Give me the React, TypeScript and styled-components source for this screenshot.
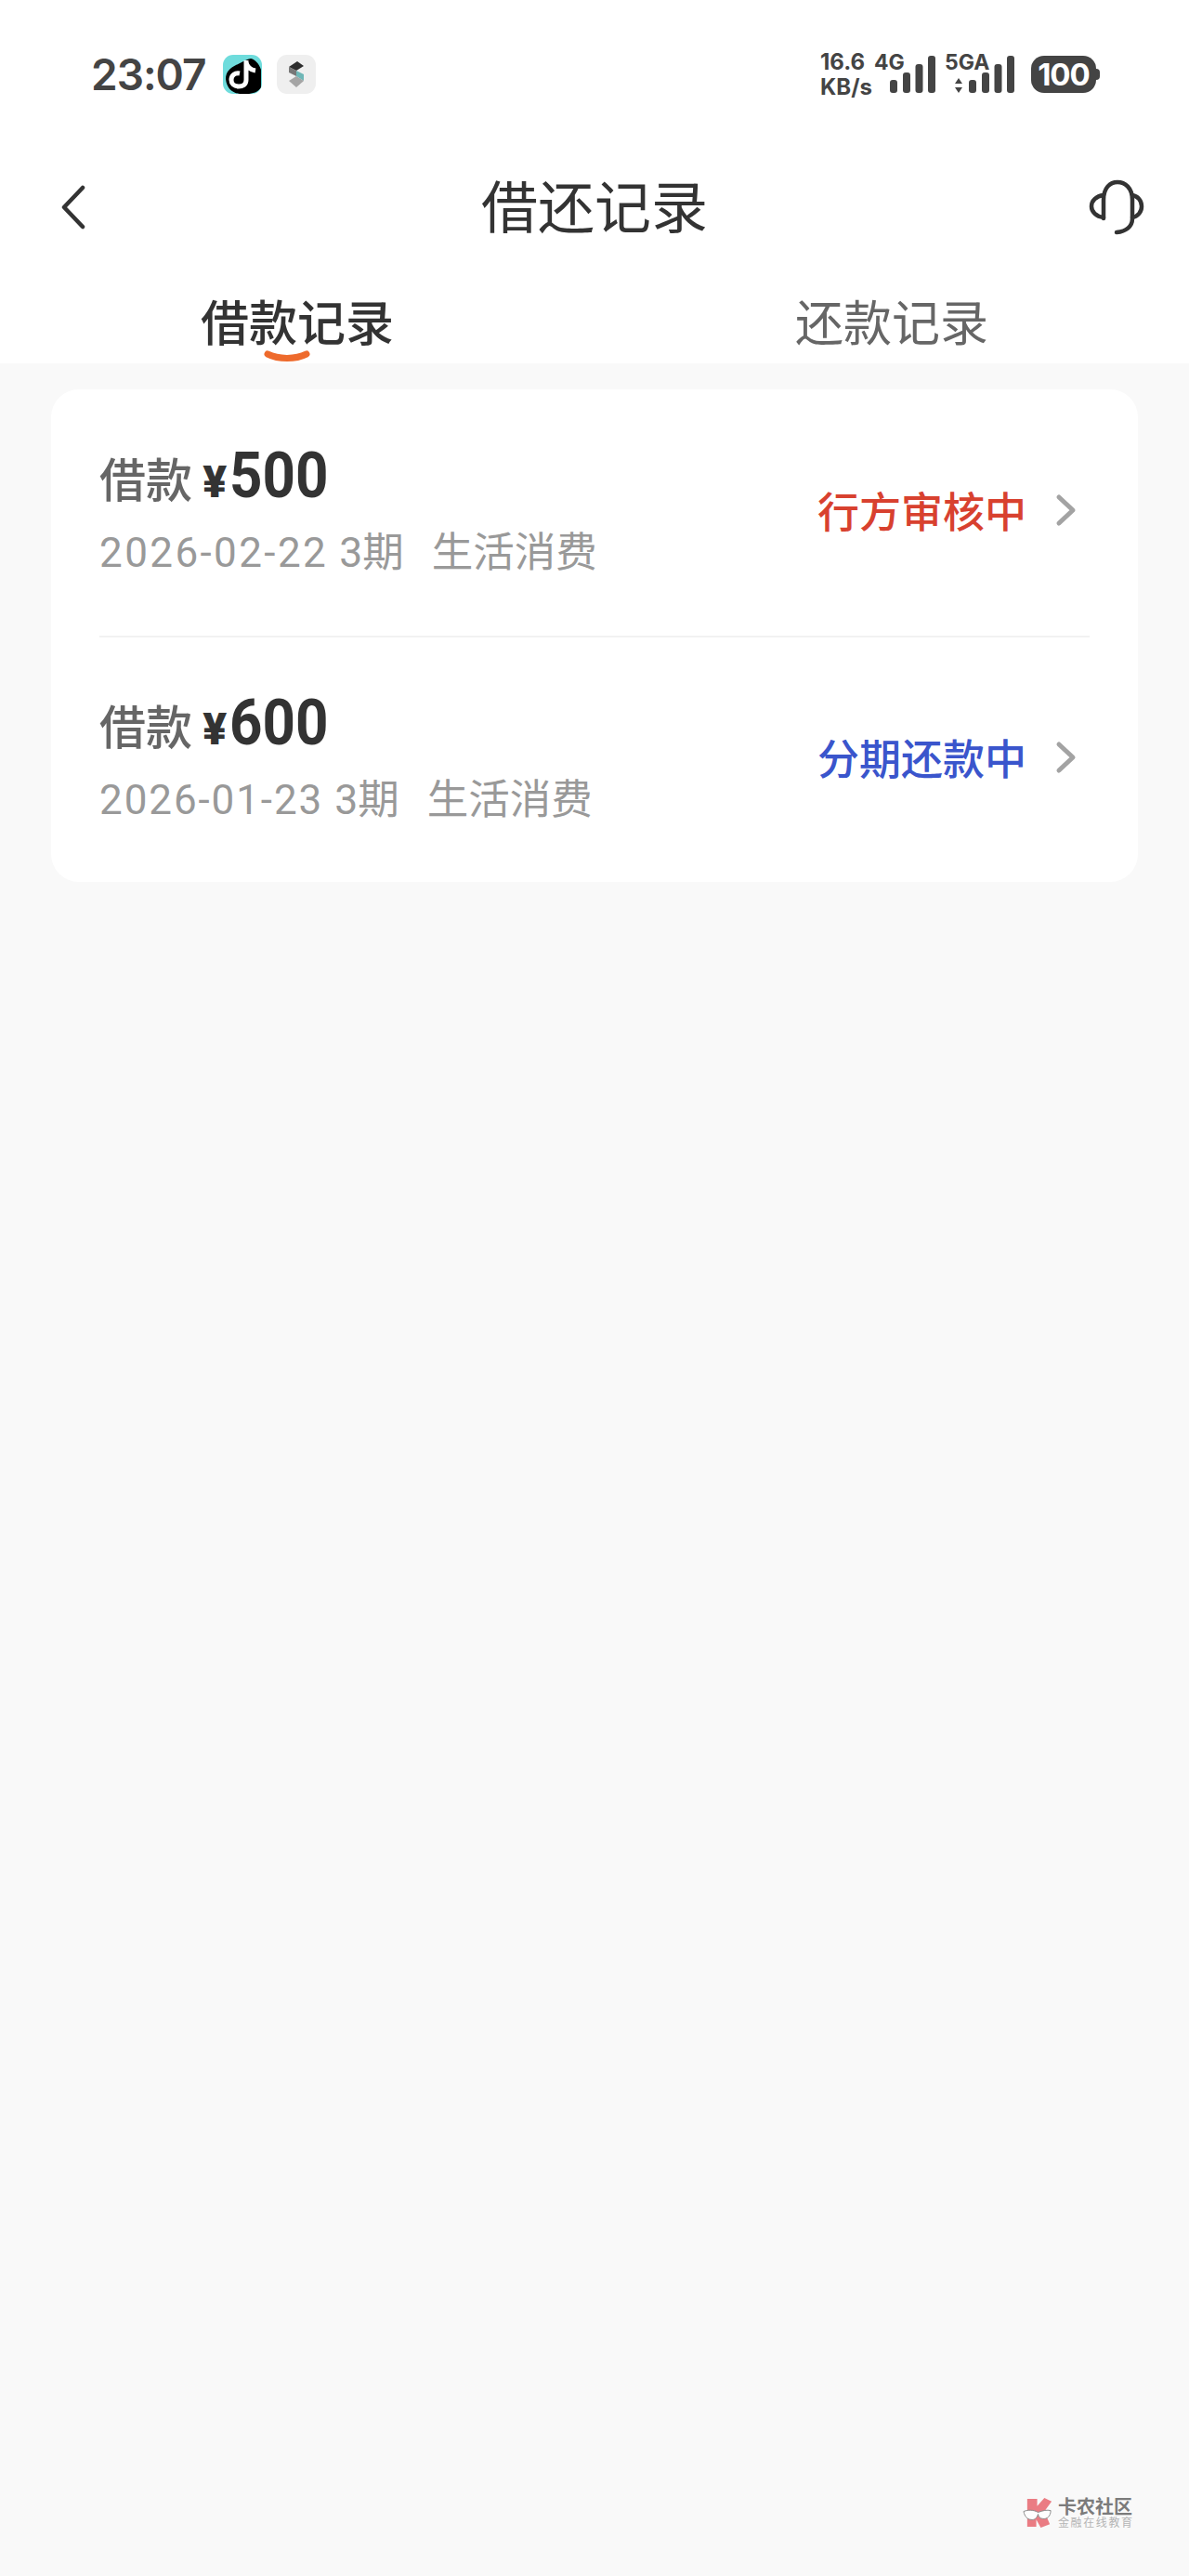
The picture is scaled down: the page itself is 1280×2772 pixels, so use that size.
import React from 'react'
import styled, { createGlobalStyle } from 'styled-components'

const GlobalStyle = createGlobalStyle`
  html, body { margin: 0; padding: 0; background: #f9f9f9; }
  * { box-sizing: border-box; }
  body { font-family: "Noto Sans CJK SC", "Noto Sans", sans-serif; }
`

type Loan = {
  amount: string
  date: string
  period: string
  track: number
  status: string
  tone: string
}

const loans: Loan[] = [
  { amount: '500', date: '2026-02-22', period: '3期', track: 2.4, status: '行方审核中', tone: '#d8412f' },
  { amount: '600', date: '2026-01-23', period: '3期', track: 1.9, status: '分期还款中', tone: '#3a55cc' },
]

const Bars = () => (
  <svg width={49} height={40} viewBox="0 0 49 40" fill="#444">
    <rect x="0" y="26" width="8" height="14" rx="3" />
    <rect x="14" y="18" width="8" height="22" rx="3" />
    <rect x="27.5" y="9" width="8" height="31" rx="3" />
    <rect x="41" y="0" width="8" height="40" rx="3" />
  </svg>
)

const App = () => {
  return (
    <Page>
      <GlobalStyle />
      <TopArea>
        <StatusBar>
          <StatusLeft>
            <Clock>23:07</Clock>
            <AppIcon $bg="#6fdcdc">
              <svg width="42" height="42" viewBox="0 0 42 42">
                <path d="M3 26 C3 18 8 14 14 11 C19 9 24 5 30 4 C35 5 39 10 41 16 V35 C38 40 32 42 26 42 H18 C10 41 4 36 3 26 Z" fill="#000" />
                <path d="M25 6 V27 C25 32 21 34 17 34 C12 34 9 31 9 27 C9 22 13 19 18 20 M25 8 C26 13 29 16 35 17" stroke="#fff" strokeWidth="5" fill="none" />
              </svg>
            </AppIcon>
            <AppIcon $bg="#efefef">
              <svg width="42" height="42" viewBox="0 0 42 42">
                <path d="M13 13 L22 7 L29 12 L21 17 Z" fill="#2e2e2e" />
                <path d="M13 13 L21 17 V23 L13 19 Z" fill="#777" />
                <path d="M21 17 L29 21 V28 L21 23 Z" fill="#6fb7b7" />
                <path d="M13 28 L21 23 L29 28 L21 35 Z" fill="#a5a5a5" />
              </svg>
            </AppIcon>
          </StatusLeft>
          <StatusRight>
            <Speed>
              <span>16.6</span>
              <span>KB/s</span>
            </Speed>
            <Signal $width={66} $after={10}>
              <NetLabel>4G</NetLabel>
              <Bars />
            </Signal>
            <Signal $width={75} $after={18}>
              <NetLabel>5GA</NetLabel>
              <Arrows width="8" height="16" viewBox="0 0 8 16" fill="#444">
                <path d="M4 0 L8 6 H0 Z M0 10 H8 L4 16 Z" />
              </Arrows>
              <Bars />
            </Signal>
            <Battery>
              100
              <BatteryNub />
            </Battery>
          </StatusRight>
        </StatusBar>
        <NavBar>
          <NavSide>
            <svg width="30" height="48" viewBox="0 0 30 48" fill="none">
              <path d="M25 3 L5 24 L25 45" stroke="#333" strokeWidth="4.5" strokeLinecap="round" strokeLinejoin="round" />
            </svg>
          </NavSide>
          <Title>借还记录</Title>
          <NavSide $end>
            <svg width="60" height="62" viewBox="0 0 60 60" fill="none" stroke="#333" strokeWidth="4.5" strokeLinecap="round">
              <path d="M16 42 V22 C16 9 23 3 31 3 C39 3 47 9 47 22 V42 C47 51 40 56 30 57" />
              <path d="M16 17 C8 18 3 23 3 29 C3 35 8 40 16 41" />
              <path d="M47 17 C53 18 57 23 57 29 C57 35 53 40 47 41" />
            </svg>
          </NavSide>
        </NavBar>
        <Tabs>
          <Tab $active>
            借款记录
            <TabMark width="50" height="14" viewBox="0 0 50 14" fill="none">
              <path d="M4 4 C16 10 34 10 46 4" stroke="#ee6a2c" strokeWidth="7" strokeLinecap="round" />
            </TabMark>
          </Tab>
          <Tab>还款记录</Tab>
        </Tabs>
      </TopArea>
      <Content>
        <Card>
          {loans.map((loan) => (
            <Row key={loan.amount}>
              <RowText>
                <RowTitle>
                  借款 <Yen>¥</Yen>
                  <Amount>{loan.amount}</Amount>
                </RowTitle>
                <RowSub>
                  <DateText $track={loan.track}>{loan.date}</DateText>
                  <span>{loan.period}</span>
                  <Purpose>生活消费</Purpose>
                </RowSub>
              </RowText>
              <RowRight>
                <Status $tone={loan.tone}>{loan.status}</Status>
                <svg width="26" height="36" viewBox="0 0 26 36" fill="none">
                  <path d="M5 4 L20 18 L5 32" stroke="#a3a3a3" strokeWidth="5" strokeLinecap="round" strokeLinejoin="round" />
                </svg>
              </RowRight>
            </Row>
          ))}
        </Card>
      </Content>
      <Watermark>
        <svg width="34" height="34" viewBox="0 0 35 33">
          <path d="M5 1 H16 V9 L24 0 L32 4 L24 15 L30 29 L20 33 L15 24 V32 H5 Z" fill="#e8676f" />
          <path d="M1 15 C6 13 12 13 17 16 C22 14 27 13 31 14 C31 20 27 24 22 23 C19 23 17 20 17 18 C16 22 13 25 9 24 C5 24 2 20 1 15 Z" fill="#fff" stroke="#777" strokeWidth="1" />
        </svg>
        <WatermarkText>
          <strong>卡农社区</strong>
          <span>金融在线教育</span>
        </WatermarkText>
      </Watermark>
    </Page>
  )
}

export default App

const Page = styled.div`
  position: relative;
  width: 1280px;
  height: 2772px;
  background: #f9f9f9;
  overflow: hidden;
`
const TopArea = styled.header`
  background: #ffffff;
  height: 391px;
`
const StatusBar = styled.div`
  height: 160px;
  display: flex;
  align-items: center;
  justify-content: space-between;
  padding: 0 96px 0 98px;
`
const StatusLeft = styled.div`
  display: flex;
  align-items: center;
`
const Clock = styled.span`
  font-family: Inter, sans-serif;
  font-size: 46px;
  font-weight: 600;
  color: #444;
  width: 142px;
  letter-spacing: -1px;
`
const AppIcon = styled.span<{ $bg: string }>`
  width: 42px;
  height: 42px;
  margin-right: 16px;
  border-radius: 11px;
  background: ${(p) => p.$bg};
  overflow: hidden;
  display: block;
`
const StatusRight = styled.div`
  display: flex;
  align-items: center;
  color: #444;
  font-family: Inter, sans-serif;
  font-weight: 700;
`
const Speed = styled.div`
  display: flex;
  flex-direction: column;
  width: 58px;
  font-size: 24px;
  line-height: 27px;
  white-space: nowrap;
`
const Signal = styled.div<{ $width: number; $after: number }>`
  position: relative;
  width: ${(p) => p.$width}px;
  height: 40px;
  display: flex;
  justify-content: flex-end;
  margin-right: ${(p) => p.$after}px;
`
const NetLabel = styled.span`
  position: absolute;
  left: 0;
  top: -6px;
  font-size: 23px;
  line-height: 26px;
`
const Arrows = styled.svg`
  position: absolute;
  left: 11px;
  bottom: 0;
`
const Battery = styled.div`
  position: relative;
  width: 70px;
  height: 40px;
  margin-right: 4px;
  border-radius: 14px;
  background: #444;
  color: #fff;
  font-size: 33px;
  letter-spacing: -1px;
  line-height: 40px;
  text-align: center;
`
const BatteryNub = styled.i`
  position: absolute;
  right: -4px;
  top: 14px;
  width: 4px;
  height: 12px;
  border-radius: 0 4px 4px 0;
  background: #444;
`
const NavBar = styled.div`
  height: 126px;
  display: grid;
  grid-template-columns: 1fr auto 1fr;
  align-items: center;
  padding: 0 48px;
`
const NavSide = styled.div<{ $end?: boolean }>`
  display: flex;
  justify-content: ${(p) => (p.$end ? 'flex-end' : 'flex-start')};
  padding-left: ${(p) => (p.$end ? 0 : 16)}px;
`
const Title = styled.h1`
  margin: 0 0 8px;
  font-size: 61px;
  font-weight: 400;
  color: #333;
  line-height: 1;
`
const Tabs = styled.nav`
  display: grid;
  grid-template-columns: 1fr 1fr;
`
const Tab = styled.div<{ $active?: boolean }>`
  position: relative;
  height: 105px;
  padding-top: 23px;
  text-align: center;
  font-size: 52px;
  line-height: 72px;
  font-weight: ${(p) => (p.$active ? 500 : 400)};
  color: ${(p) => (p.$active ? '#333' : '#666')};
`
const TabMark = styled.svg`
  position: absolute;
  left: 284px;
  bottom: 0;
`
const Content = styled.main`
  padding: 28px 55px;
`
const Card = styled.section`
  background: #fff;
  border-radius: 30px;
  overflow: hidden;
  padding: 0 52px;
`
const Row = styled.div`
  height: 265px;
  padding-bottom: 4px;
  display: flex;
  align-items: center;
  justify-content: space-between;
  & + & {
    border-top: 2px solid #f2f2f2;
  }
`
const RowText = styled.div`
  display: flex;
  flex-direction: column;
  gap: 18px;
`
const RowTitle = styled.div`
  display: flex;
  align-items: baseline;
  font-size: 50px;
  line-height: 66px;
  font-weight: 500;
  color: #666;
  white-space: pre;
`
const Yen = styled.span`
  font-family: Roboto, sans-serif;
  font-size: 48px;
  font-weight: 900;
  color: #333;
  margin-right: 3px;
`
const Amount = styled.span`
  font-family: Roboto, sans-serif;
  font-size: 68px;
  font-weight: 700;
  color: #333;
  transform: scaleX(0.91);
  transform-origin: left center;
`
const RowSub = styled.div`
  display: flex;
  font-family: Roboto, "Noto Sans CJK SC", sans-serif;
  font-size: 44.5px;
  line-height: 50px;
  color: #999;
`
const DateText = styled.span<{ $track: number }>`
  font-size: 44px;
  letter-spacing: ${(p) => p.$track}px;
  margin-right: 12px;
`
const Purpose = styled.span`
  margin-left: 30px;
`
const RowRight = styled.div`
  display: flex;
  align-items: center;
  gap: 30px;
  margin: 0 12px 2px 0;
`
const Status = styled.span<{ $tone: string }>`
  font-size: 45px;
  font-weight: 500;
  color: ${(p) => p.$tone};
`
const Watermark = styled.aside`
  position: absolute;
  left: 1101px;
  top: 2687px;
  display: flex;
  align-items: center;
  gap: 4px;
  opacity: 0.85;
`
const WatermarkText = styled.div`
  display: flex;
  flex-direction: column;
  color: #666;
  strong {
    font-size: 20px;
    line-height: 20px;
    font-weight: 700;
    white-space: nowrap;
  }
  span {
    font-size: 12px;
    line-height: 14px;
    letter-spacing: 1.6px;
    color: #aaa;
    white-space: nowrap;
  }
`
